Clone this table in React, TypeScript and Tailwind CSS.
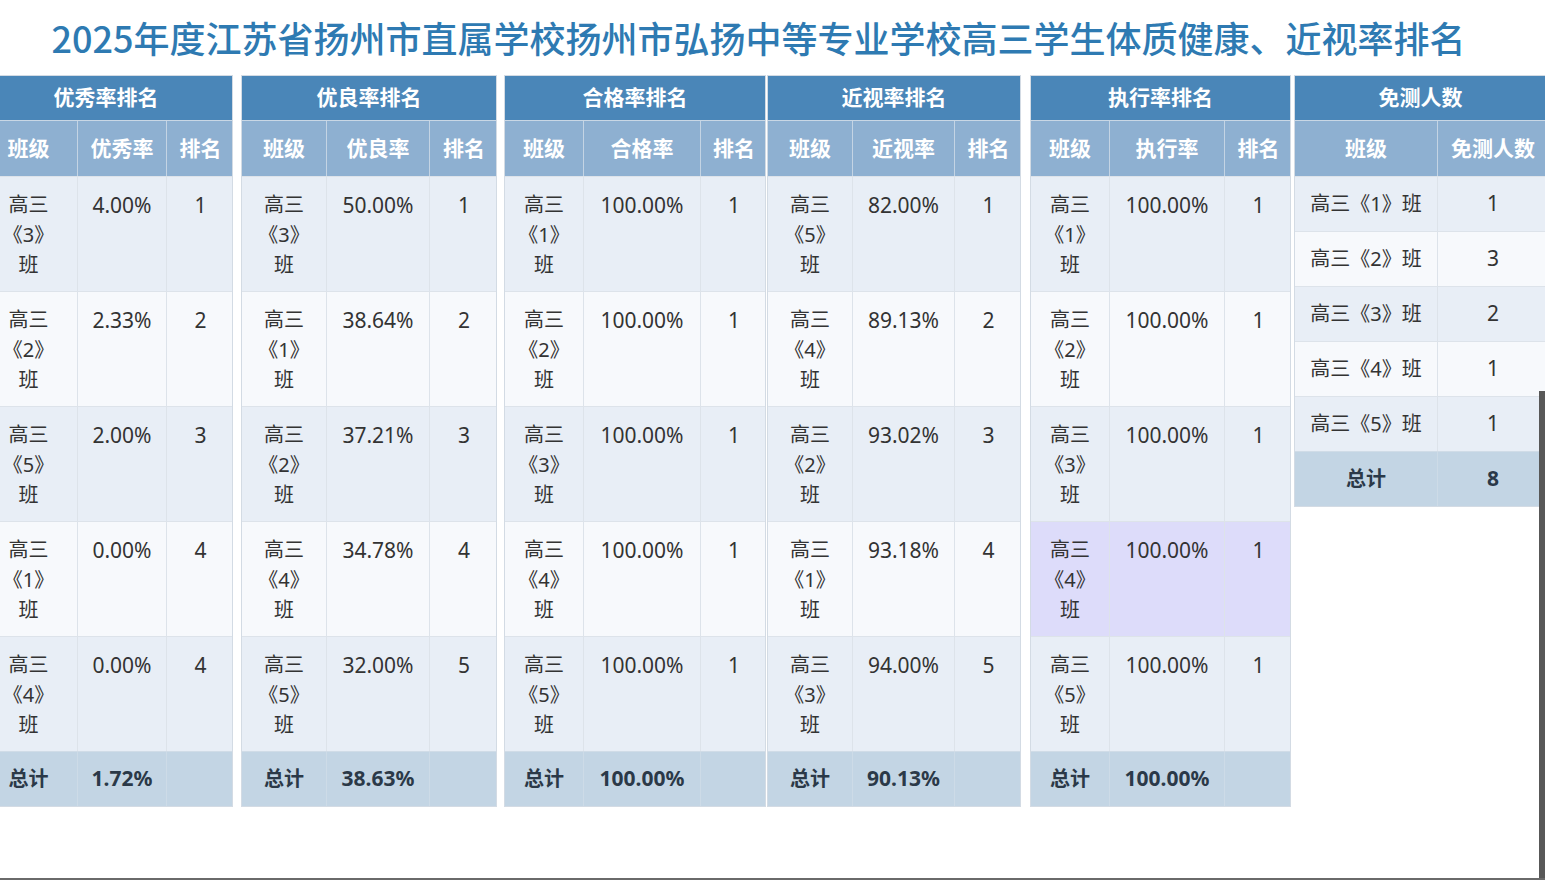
import React from "react";

type Row = { cls: string; val: string; rank?: string; hl?: boolean };

type TableDef = {
  title: string;
  headers: string[];
  grid: string;
  width: string;
  ml: string;
  rows: Row[];
  total: string;
};

const FONT = {
  fontFamily: '"Noto Sans", "Noto Sans CJK SC", sans-serif',
};

const tables: TableDef[] = [
  {
    title: "优秀率排名",
    headers: ["班级", "优秀率", "排名"],
    grid: "grid-cols-[98px_89px_67px]",
    width: "w-[254px]",
    ml: "-ml-[21px]",
    rows: [
      { cls: "3", val: "4.00%", rank: "1" },
      { cls: "2", val: "2.33%", rank: "2" },
      { cls: "5", val: "2.00%", rank: "3" },
      { cls: "1", val: "0.00%", rank: "4" },
      { cls: "4", val: "0.00%", rank: "4" },
    ],
    total: "1.72%",
  },
  {
    title: "优良率排名",
    headers: ["班级", "优良率", "排名"],
    grid: "grid-cols-[85px_103px_68px]",
    width: "w-[256px]",
    ml: "ml-[8px]",
    rows: [
      { cls: "3", val: "50.00%", rank: "1" },
      { cls: "1", val: "38.64%", rank: "2" },
      { cls: "2", val: "37.21%", rank: "3" },
      { cls: "4", val: "34.78%", rank: "4" },
      { cls: "5", val: "32.00%", rank: "5" },
    ],
    total: "38.63%",
  },
  {
    title: "合格率排名",
    headers: ["班级", "合格率", "排名"],
    grid: "grid-cols-[79px_117px_66px]",
    width: "w-[262px]",
    ml: "ml-[7px]",
    rows: [
      { cls: "1", val: "100.00%", rank: "1" },
      { cls: "2", val: "100.00%", rank: "1" },
      { cls: "3", val: "100.00%", rank: "1" },
      { cls: "4", val: "100.00%", rank: "1" },
      { cls: "5", val: "100.00%", rank: "1" },
    ],
    total: "100.00%",
  },
  {
    title: "近视率排名",
    headers: ["班级", "近视率", "排名"],
    grid: "grid-cols-[85px_102px_67px]",
    width: "w-[254px]",
    ml: "ml-[1px]",
    rows: [
      { cls: "5", val: "82.00%", rank: "1" },
      { cls: "4", val: "89.13%", rank: "2" },
      { cls: "2", val: "93.02%", rank: "3" },
      { cls: "1", val: "93.18%", rank: "4" },
      { cls: "3", val: "94.00%", rank: "5" },
    ],
    total: "90.13%",
  },
  {
    title: "执行率排名",
    headers: ["班级", "执行率", "排名"],
    grid: "grid-cols-[79px_115px_67px]",
    width: "w-[261px]",
    ml: "ml-[9px]",
    rows: [
      { cls: "1", val: "100.00%", rank: "1" },
      { cls: "2", val: "100.00%", rank: "1" },
      { cls: "3", val: "100.00%", rank: "1" },
      { cls: "4", val: "100.00%", rank: "1", hl: true },
      { cls: "5", val: "100.00%", rank: "1" },
    ],
    total: "100.00%",
  },
];

function rowBg(i: number, hl?: boolean) {
  if (hl) return "bg-[#dddcfa]";
  return i % 2 === 0 ? "bg-[#e8eef6]" : "bg-[#f7f9fc]";
}

function RankTable({ t }: { t: TableDef }) {
  return (
    <div className={`${t.width} ${t.ml} shrink-0 flex flex-col border border-[#d3dbe4]`}>
      <div className="h-[45px] bg-[#4a86b8] flex items-center justify-center text-white font-bold text-[21px] border-b border-[#c9d7e5]">
        {t.title}
      </div>
      <div className={`grid ${t.grid} h-[55px] bg-[#8eb0d1] text-white font-bold text-[21px]`}>
        {t.headers.map((h, i) => (
          <div
            key={h}
            className={`flex items-center justify-center ${i < 2 ? "border-r border-[#c4d4e4]" : ""}`}
          >
            {h}
          </div>
        ))}
      </div>
      {t.rows.map((r, i) => (
        <div
          key={i}
          className={`grid ${t.grid} h-[115px] ${rowBg(i, r.hl)} text-[20px] leading-[30px] text-[#333333] border-t border-[#dde3ea]`}
        >
          <div className="pt-[13px] text-center border-r border-[#dde3ea]">
            高三
            <br />
            《{r.cls}》
            <br />
            班
          </div>
          <div className="pt-[13px] text-center text-[21px] border-r border-[#dde3ea]">{r.val}</div>
          <div className="pt-[13px] text-center text-[21px]">{r.rank}</div>
        </div>
      ))}
      <div
        className={`grid ${t.grid} h-[55px] bg-[#c3d5e4] text-[20px] font-bold text-[#2b3948] border-t border-[#d0dce7]`}
      >
        <div className="flex items-center justify-center border-r border-[#cddbe7]">总计</div>
        <div className="flex items-center justify-center text-[21px] border-r border-[#cddbe7]">{t.total}</div>
        <div />
      </div>
    </div>
  );
}

function ExemptTable() {
  const rows = [
    ["1", "1"],
    ["2", "3"],
    ["3", "2"],
    ["4", "1"],
    ["5", "1"],
  ];
  return (
    <div className="w-[253px] ml-[3px] shrink-0 flex flex-col self-start border border-[#d3dbe4]">
      <div className="h-[45px] bg-[#4a86b8] flex items-center justify-center text-white font-bold text-[21px] border-b border-[#c9d7e5]">
        免测人数
      </div>
      <div className="grid grid-cols-[143px_110px] h-[55px] bg-[#8eb0d1] text-white font-bold text-[21px]">
        <div className="flex items-center justify-center border-r border-[#c4d4e4]">班级</div>
        <div className="flex items-center justify-center">免测人数</div>
      </div>
      {rows.map((r, i) => (
        <div
          key={i}
          className={`grid grid-cols-[143px_110px] h-[55px] ${rowBg(i)} text-[20px] text-[#333333] border-t border-[#dde3ea]`}
        >
          <div className="flex items-center justify-center border-r border-[#dde3ea]">
            高三《{r[0]}》班
          </div>
          <div className="flex items-center justify-center text-[21px]">{r[1]}</div>
        </div>
      ))}
      <div className="grid grid-cols-[143px_110px] h-[55px] bg-[#c3d5e4] text-[20px] font-bold text-[#2b3948] border-t border-[#d0dce7]">
        <div className="flex items-center justify-center border-r border-[#cddbe7]">总计</div>
        <div className="flex items-center justify-center text-[21px]">8</div>
      </div>
    </div>
  );
}

export default function App() {
  return (
    <div className="relative w-[1545px] h-[880px] overflow-hidden bg-white" style={FONT}>
      <div className="h-[75px] flex items-center justify-center pr-[28px]">
        <h1
          className="text-[36px] font-medium text-[#2e7ab2] leading-none whitespace-nowrap pb-[2px]"
          style={{ fontFamily: '"Noto Sans CJK SC", "Noto Sans", sans-serif' }}
        >
          2025年度江苏省扬州市直属学校扬州市弘扬中等专业学校高三学生体质健康、近视率排名
        </h1>
      </div>
      <div className="flex items-start">
        {tables.map((t) => (
          <RankTable key={t.title} t={t} />
        ))}
        <ExemptTable />
      </div>
      <div className="absolute right-0 top-[391px] bottom-0 w-[6px] bg-[#585858]" />
      <div className="absolute left-0 right-0 bottom-0 h-[2px] bg-[#6a6a6a]" />
    </div>
  );
}
